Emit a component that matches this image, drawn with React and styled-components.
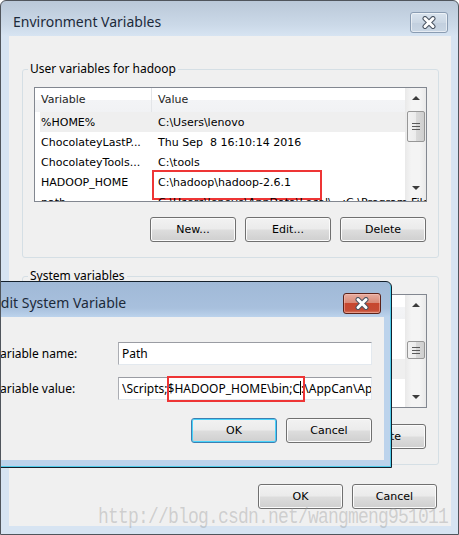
import styled, { createGlobalStyle } from 'styled-components';

const GlobalStyle = createGlobalStyle`
  html, body {
    margin: 0;
    padding: 0;
    background: #ffffff;
  }
  body {
    font-family: "Noto Sans", "Liberation Sans", sans-serif;
    color: #000;
  }
`;

const Window = styled.div`
  position: relative;
  width: 459px;
  height: 535px;
  box-sizing: border-box;
  border: 1px solid #50555c;
  border-radius: 6px 6px 0 0;
  background: linear-gradient(#bac8d8 0px, #cbd9e8 24px, #d7e4f2 35px);
  display: flex;
  flex-direction: column;
  overflow: hidden;
`;

const TitleBar = styled.div`
  height: 35px;
  flex: none;
  display: flex;
  align-items: flex-start;
  justify-content: space-between;
  padding: 0 10px 0 ${p => p.$pad || 12}px;
`;

const TitleText = styled.div`
  font-size: 14px;
  line-height: 20px;
  margin-top: 11px;
  color: #1c2a3a;
  white-space: nowrap;
`;

const CloseButton = styled.div`
  width: 38px;
  height: 21px;
  margin-top: 11px;
  box-sizing: border-box;
  border-radius: 3px;
  display: flex;
  align-items: center;
  justify-content: center;
  border: 1px solid ${p => (p.$active ? '#5b2219' : '#8a9cb2')};
  background: ${p =>
    p.$active
      ? 'linear-gradient(#e6ada0 0%, #d98a78 45%, #c7472f 50%, #c54a34 85%, #d77a60 100%)'
      : 'linear-gradient(#d9e3ee 0%, #cbd7e4 50%, #c2cfde 51%, #c9d6e4 100%)'};
  box-shadow: inset 0 0 0 1px ${p => (p.$active ? 'rgba(255,200,190,0.45)' : 'rgba(255,255,255,0.55)')};
`;

const Client = styled.div`
  flex: 1;
  margin: 0 7px 8px 8px;
  background: #f0f0f0;
  padding: 0 12px 0 13px;
  display: flex;
  flex-direction: column;
`;

const Group = styled.fieldset`
  margin: ${p => p.$top}px 0 0 0;
  padding: 10px 11px 15px 11px;
  border: 1px solid #d5dfe5;
  border-radius: 3px;
  min-width: 0;
`;

const Legend = styled.legend`
  margin-left: -6px;
  padding: 0 2px;
  font-size: 12px;
  line-height: 16px;
  color: #000;
`;

const ListBox = styled.div`
  height: ${p => p.$h}px;
  box-sizing: border-box;
  border: 1px solid #828790;
  background: #fff;
  display: flex;
  overflow: hidden;
`;

const ListBody = styled.div`
  flex: 1;
  min-width: 0;
  display: flex;
  flex-direction: column;
  font-family: "DejaVu Sans", sans-serif;
  font-size: 11px;
`;

const HeaderRow = styled.div`
  height: 24px;
  flex: none;
  display: flex;
  background: linear-gradient(#ffffff 0%, #ffffff 50%, #f3f4f6 51%, #f1f2f4 100%);
`;

const HeaderCell = styled.div`
  width: ${p => (p.$w ? `${p.$w}px` : 'auto')};
  flex: ${p => (p.$w ? 'none' : '1')};
  box-sizing: border-box;
  padding-left: 6px;
  line-height: 23px;
  color: #1e1e1e;
  border-right: ${p => (p.$w ? '1px solid #e3e5e8' : 'none')};
`;

const Row = styled.div`
  height: 20px;
  flex: none;
  display: flex;
  align-items: center;
  background: ${p => (p.$selected ? 'linear-gradient(90deg, transparent 5px, #efefef 5px)' : 'transparent')};
`;

const Cell = styled.div`
  position: relative;
  width: ${p => (p.$w ? `${p.$w}px` : 'auto')};
  flex: ${p => (p.$w ? 'none' : '1')};
  box-sizing: border-box;
  padding-left: 6px;
  white-space: pre;
  overflow: visible;
  color: #000;
`;

const RedBox = styled.div`
  position: absolute;
  left: ${p => p.$l}px;
  top: ${p => p.$t}px;
  width: ${p => p.$w}px;
  height: ${p => p.$h}px;
  box-sizing: border-box;
  border: 2px solid #ee3535;
  pointer-events: none;
`;

const ScrollBar = styled.div`
  width: 21px;
  flex: none;
  display: flex;
  flex-direction: column;
  align-items: center;
  background: linear-gradient(90deg, #e9e9e9 0%, #f4f4f4 30%, #f4f4f4 70%, #e9e9e9 100%);
`;

const ArrowBtn = styled.div`
  height: 20px;
  flex: none;
  display: flex;
  align-items: center;
  justify-content: center;
  margin-top: ${p => p.$mt || 0}px;
  &::after {
    content: '';
    border-left: 4px solid transparent;
    border-right: 4px solid transparent;
    ${p => (p.$down ? 'border-top' : 'border-bottom')}: 4px solid #3c3c3c;
  }
`;

const Thumb = styled.div`
  width: 18px;
  height: ${p => p.$h}px;
  margin-top: ${p => p.$mt}px;
  box-sizing: border-box;
  border: 1px solid #979797;
  border-radius: 2px;
  background: linear-gradient(90deg, #f2f2f2 0%, #ebebeb 50%, #d9d9d9 51%, #cfcfcf 100%);
  display: flex;
  flex-direction: column;
  align-items: center;
  justify-content: center;
  gap: 2px;
`;

const Grip = styled.div`
  width: 8px;
  height: 1px;
  background: #5a5a5a;
`;

const ButtonRow = styled.div`
  display: flex;
  justify-content: flex-end;
  gap: ${p => p.$gap || 9}px;
  margin-top: ${p => p.$mt}px;
  padding-right: ${p => p.$pr || 0}px;
`;

const Button = styled.div`
  width: ${p => p.$w || 86}px;
  height: 25px;
  box-sizing: border-box;
  border: 1px solid ${p => (p.$default ? '#3c7fb1' : '#707070')};
  border-radius: 3px;
  background: linear-gradient(#f2f2f2 0%, #ebebeb 48%, #dddddd 52%, #cfcfcf 100%);
  box-shadow: inset 0 0 0 1px ${p => (p.$default ? '#48d3fb' : '#fbfbfb')};
  display: flex;
  align-items: center;
  justify-content: center;
  font-family: "DejaVu Sans", sans-serif;
  font-size: 11px;
  color: #000;
`;

const Dialog = styled.div`
  position: absolute;
  left: -22px;
  top: 280px;
  width: 413px;
  height: 187px;
  box-sizing: border-box;
  border: 1px solid #14202c;
  border-radius: 6px 6px 0 0;
  background: linear-gradient(#a0b9d7 0px, #a8c0dd 26px, #bcd3ec 35px);
  box-shadow: inset -1px -1px 0 #4fcbe9;
  display: flex;
  flex-direction: column;
  z-index: 2;
`;

const DialogClient = styled.div`
  flex: 1;
  margin: 0 7px 7px 7px;
  background: #f0f0f0;
  padding: 25px 12px 0 6px;
`;

const FormGrid = styled.div`
  display: grid;
  grid-template-columns: 1fr 254px;
  row-gap: 12px;
  align-items: center;
`;

const Label = styled.div`
  font-size: 12px;
  white-space: nowrap;
  color: #000;
`;

const TextBox = styled.div`
  position: relative;
  height: 23px;
  box-sizing: border-box;
  border: 1px solid #abadb3;
  border-top-color: #9a9ca3;
  border-right-color: #e3e9ef;
  border-bottom-color: #e3e9ef;
  background: #fff;
  padding-left: 3px;
  font-size: 12px;
  line-height: 21px;
  white-space: pre;
`;

const TextClip = styled.div`
  overflow: hidden;
`;

const Caret = styled.span`
  display: inline-block;
  width: 1px;
  height: 14px;
  background: #000;
  vertical-align: -2px;
`;

const Watermark = styled.div`
  position: absolute;
  left: 97px;
  top: 503px;
  font-family: "Liberation Mono", monospace;
  font-size: 18px;
  letter-spacing: -0.8px;
  line-height: 22px;
  color: rgba(150, 150, 150, 0.38);
  transform: scaleY(1.2);
  transform-origin: left top;
  white-space: nowrap;
  z-index: 3;
`;

function CloseGlyph() {
  return (
    <svg width="16" height="13" viewBox="0 0 16 13">
      <path d="M4 2.5 L12 10.5 M12 2.5 L4 10.5" stroke="#4a5462" strokeWidth="5" strokeLinecap="round" />
      <path d="M4 2.5 L12 10.5 M12 2.5 L4 10.5" stroke="#ffffff" strokeWidth="3" strokeLinecap="round" />
    </svg>
  );
}

function List({ height, rows, thumbTop, thumbH, downTop }) {
  return (
    <ListBox $h={height}>
      <ListBody>
        <HeaderRow>
          <HeaderCell $w={117}>Variable</HeaderCell>
          <HeaderCell>Value</HeaderCell>
        </HeaderRow>
        {rows.map(r => (
          <Row key={r.name} $selected={r.selected}>
            <Cell $w={117}>{r.name}</Cell>
            <Cell>
              {r.value}
              {r.boxed && <RedBox $l={0} $t={-6} $w={170} $h={30} />}
            </Cell>
          </Row>
        ))}
      </ListBody>
      <ScrollBar>
        <ArrowBtn />
        <Thumb $h={thumbH} $mt={thumbTop}>
          <Grip />
          <Grip />
          <Grip />
        </Thumb>
        <ArrowBtn $down $mt={downTop} />
      </ScrollBar>
    </ListBox>
  );
}

const userRows = [
  { name: '%HOME%', value: 'C:\\Users\\lenovo', selected: true },
  { name: 'ChocolateyLastP...', value: 'Thu Sep  8 16:10:14 2016' },
  { name: 'ChocolateyTools...', value: 'C:\\tools' },
  { name: 'HADOOP_HOME', value: 'C:\\hadoop\\hadoop-2.6.1', boxed: true },
  { name: 'path', value: 'C:\\Users\\lenovo\\AppData\\Local\\...;C:\\Program Files\\' },
];

const systemRows = [
  { name: 'NUMBER_OF_P...', value: '4' },
  { name: 'OS', value: 'Windows_NT' },
  { name: 'Path', value: 'C:\\ProgramData\\Oracle\\Java\\javapath;...', selected: true },
  { name: 'PATHEXT', value: '.COM;.EXE;.BAT;.CMD;.VBS;.VBE;.JS;...' },
  { name: 'PROCESSOR_A...', value: 'AMD64' },
];

export default function App() {
  return (
    <>
      <GlobalStyle />
      <Window>
        <TitleBar>
          <TitleText>Environment Variables</TitleText>
          <CloseButton>
            <CloseGlyph />
          </CloseButton>
        </TitleBar>

        <Client>
          <Group $top={25}>
            <Legend>User variables for hadoop</Legend>
            <List height={115} rows={userRows} thumbTop={3} thumbH={31} downTop={36} />
            <ButtonRow $mt={15} $pr={1}>
              <Button>New...</Button>
              <Button>Edit...</Button>
              <Button>Delete</Button>
            </ButtonRow>
          </Group>

          <Group $top={10}>
            <Legend>System variables</Legend>
            <List height={114} rows={systemRows} thumbTop={26} thumbH={18} downTop={28} />
            <ButtonRow $mt={16} $pr={1}>
              <Button>New...</Button>
              <Button>Edit...</Button>
              <Button>Delete</Button>
            </ButtonRow>
          </Group>

          <ButtonRow $mt={19} $pr={2}>
            <Button $w={85}>OK</Button>
            <Button $w={85}>Cancel</Button>
          </ButtonRow>
        </Client>

        <Dialog>
          <TitleBar $pad={13}>
            <TitleText>Edit System Variable</TitleText>
            <CloseButton $active>
              <CloseGlyph />
            </CloseButton>
          </TitleBar>
          <DialogClient>
            <FormGrid>
              <Label>Variable name:</Label>
              <TextBox>Path</TextBox>
              <Label>Variable value:</Label>
              <TextBox>
                <TextClip>
                  {'\\Scripts;$HADOOP_HOME\\bin;C'}
                  <Caret />
                  {':\\AppCan\\AppCan\\bin'}
                </TextClip>
                <RedBox $l={48} $t={-2} $w={138} $h={26} />
              </TextBox>
            </FormGrid>
            <ButtonRow $mt={18}>
              <Button $default>OK</Button>
              <Button>Cancel</Button>
            </ButtonRow>
          </DialogClient>
        </Dialog>

        <Watermark>http://blog.csdn.net/wangmeng951011</Watermark>
      </Window>
    </>
  );
}
